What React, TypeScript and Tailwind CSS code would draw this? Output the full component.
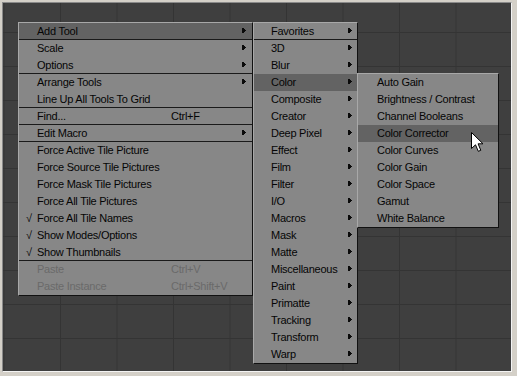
import React from 'react'

type Item = {
  label: string
  shortcut?: string
  sub?: boolean
  check?: boolean
  sep?: boolean
  disabled?: boolean
  active?: boolean
}

const mainItems: Item[] = [
  { label: 'Add Tool', sub: true, active: true, sep: true },
  { label: 'Scale', sub: true },
  { label: 'Options', sub: true, sep: true },
  { label: 'Arrange Tools', sub: true },
  { label: 'Line Up All Tools To Grid', sep: true },
  { label: 'Find...', shortcut: 'Ctrl+F', sep: true },
  { label: 'Edit Macro', sub: true, sep: true },
  { label: 'Force Active Tile Picture' },
  { label: 'Force Source Tile Pictures' },
  { label: 'Force Mask Tile Pictures' },
  { label: 'Force All Tile Pictures' },
  { label: 'Force All Tile Names', check: true },
  { label: 'Show Modes/Options', check: true },
  { label: 'Show Thumbnails', check: true, sep: true },
  { label: 'Paste', shortcut: 'Ctrl+V', disabled: true },
  { label: 'Paste Instance', shortcut: 'Ctrl+Shift+V', disabled: true },
]

const toolItems = [
  'Favorites', '3D', 'Blur', 'Color', 'Composite', 'Creator', 'Deep Pixel', 'Effect', 'Film', 'Filter',
  'I/O', 'Macros', 'Mask', 'Matte', 'Miscellaneous', 'Paint', 'Primatte', 'Tracking', 'Transform', 'Warp',
]

const colorItems = [
  'Auto Gain', 'Brightness / Contrast', 'Channel Booleans', 'Color Corrector', 'Color Curves',
  'Color Gain', 'Color Space', 'Gamut', 'White Balance',
]

function Arrow() {
  return (
    <svg width="5" height="5" viewBox="0 0 5 5" shapeRendering="crispEdges" className="block">
      <path d="M0 0h2v5H0z M2 1h1v3H2z M3 2h1v1H3z" fill="#0a0a0a" />
    </svg>
  )
}

function Cursor() {
  return (
    <svg width="13" height="21" viewBox="0 0 13 21" className="absolute left-[471px] top-[132px]">
      <path
        d="M0.5 0.5 L0.5 16.5 L4.5 12.8 L7.3 19.3 L9.8 18.3 L7.1 11.8 L12 11.8 Z"
        fill="#fff"
        stroke="#000"
        strokeWidth="1"
        strokeLinejoin="miter"
      />
    </svg>
  )
}

const menuBox = 'absolute flex flex-col bg-[#878787] border-t border-l border-t-[#a8a8a8] border-l-[#a8a8a8] border-r border-b border-r-[#111] border-b-[#111]'

export default function App() {
  return (
    <div
      className="relative w-[517px] h-[376px] bg-[#d4d0c8] pt-[2px] pl-[2px] pr-[5px] pb-[4px] text-[11px] tracking-[-0.25px] text-[#050505] select-none"
      style={{ fontFamily: '"Liberation Sans", Arial, sans-serif' }}
    >
      <div className="w-full h-full border border-t-[#8a8a8a] border-l-[#8a8a8a] border-r-[#f4f4f4] border-b-[#f4f4f4]">
        <div className="w-full h-full bg-[#3f3f3f] bg-[linear-gradient(to_right,#343434_1px,transparent_1px),linear-gradient(to_bottom,#343434_1px,transparent_1px)] bg-[size:56.5px_34px] bg-[position:57px_-5px]" />
      </div>

      {/* main context menu */}
      <div className={`${menuBox} left-[18px] top-[22px] w-[235px]`}>
        {mainItems.map((it) => (
          <div
            key={it.label}
            className={`relative flex items-center h-[17px] box-border ${it.sep ? 'border-b border-b-[#1a1a1a]' : ''} ${it.active ? 'bg-[#636363]' : ''} ${it.disabled ? 'text-[#6a6a6a]' : ''}`}
          >
            <span className="w-[18px] pl-[7px] leading-none">{it.check ? '√' : ''}</span>
            <span className="w-[134px] whitespace-nowrap">{it.label}</span>
            {it.shortcut && <span className="whitespace-nowrap">{it.shortcut}</span>}
            {it.sub && (
              <span className="absolute right-[5px] top-[5px]">
                <Arrow />
              </span>
            )}
          </div>
        ))}
      </div>

      {/* Add Tool submenu */}
      <div className={`${menuBox} left-[253px] top-[22px] w-[105px]`}>
        {toolItems.map((t, i) => (
          <div
            key={t}
            className={`relative flex items-center h-[17px] box-border pl-[17px] ${i === 0 ? 'border-b border-b-[#1a1a1a]' : ''} ${t === 'Color' ? 'bg-[#636363]' : ''}`}
          >
            <span className="whitespace-nowrap">{t}</span>
            <span className="absolute right-[4px] top-[5px]">
              <Arrow />
            </span>
          </div>
        ))}
      </div>

      {/* Color submenu */}
      <div className={`${menuBox} left-[357px] top-[73px] w-[142px]`}>
        {colorItems.map((c) => (
          <div
            key={c}
            className={`flex items-center h-[17px] pl-[19px] ${c === 'Color Corrector' ? 'bg-[#636363]' : ''}`}
          >
            <span className="whitespace-nowrap">{c}</span>
          </div>
        ))}
      </div>

      <Cursor />
    </div>
  )
}
